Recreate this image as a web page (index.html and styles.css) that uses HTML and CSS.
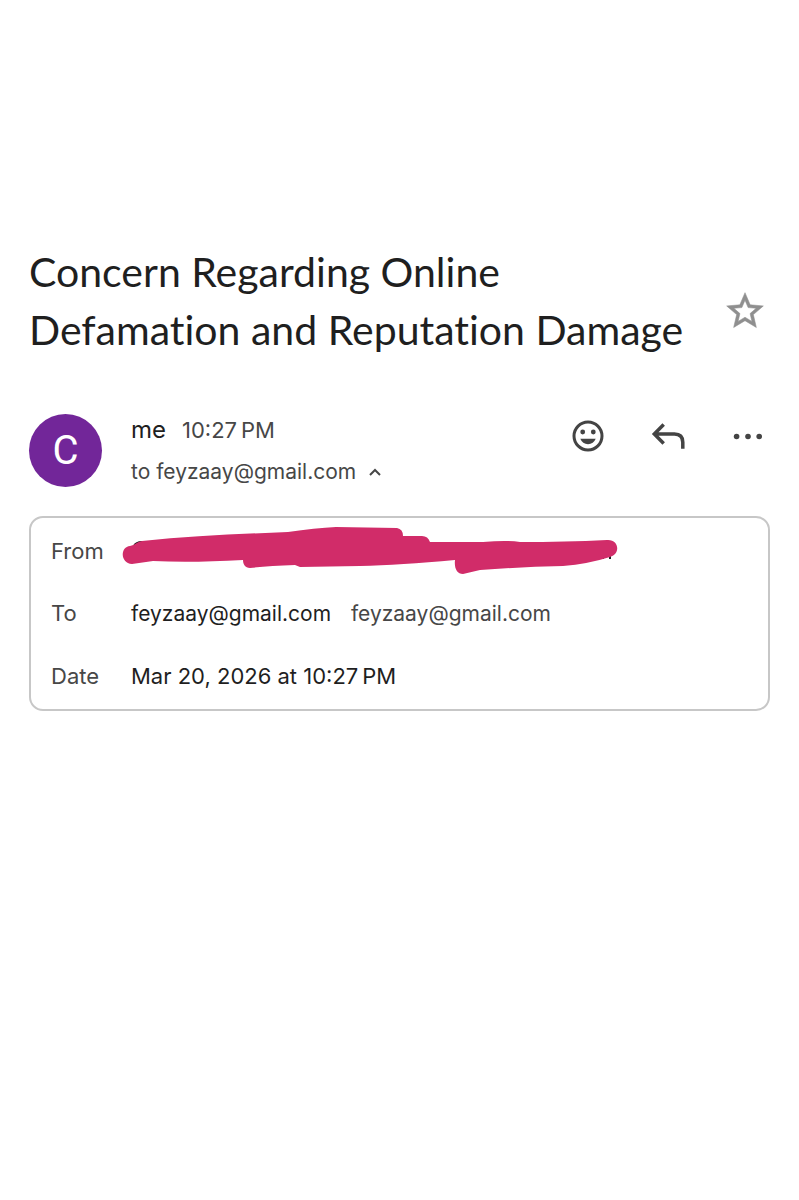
FILE: index.html
```html
<!DOCTYPE html>
<html lang="en">
<head>
    <meta charset="utf-8" />
    <meta name="viewport" content="width=device-width, initial-scale=1" />
    <title>Concern Regarding Online Defamation and Reputation Damage</title>
    <link rel="stylesheet" href="styles.css">
</head>
<body>
    <main class="mail">
        <header class="subject">
            <h1>Concern Regarding Online Defamation and Reputation Damage</h1>
            <button class="star-button" type="button" aria-label="Star">
                <svg class="star" viewBox="0 0 24 24">
                    <path d="M22 9.24l-7.19-.62L12 2 9.19 8.63 2 9.24l5.46 4.73L5.82 21 12 17.27 18.18 21l-1.63-7.03L22 9.24zM12 15.4l-3.76 2.27 1-4.28-3.32-2.88 4.38-.38L12 6.1l1.71 4.04 4.38.38-3.32 2.88 1 4.28L12 15.4z"/>
                </svg>
            </button>
        </header>

        <section class="sender">
            <div class="avatar">C</div>
            <div class="sender-info">
                <div class="sender-line">
                    <span class="name">me</span>
                    <time datetime="2026-03-20T22:27">10:27&#8239;PM</time>
                </div>
                <button class="recipient" type="button" aria-expanded="true">
                    <span class="email">to feyzaay@gmail.com</span>
                    <svg class="chevron" viewBox="0 0 14 10"><path d="M2 8l5-5 5 5"/></svg>
                </button>
            </div>
            <div class="actions">
                <button type="button" aria-label="Add reaction">
                    <svg class="action-icon" viewBox="0 0 32 32">
                        <circle class="line" cx="16" cy="16" r="14"/>
                        <circle cx="10.7" cy="12" r="2.4"/>
                        <circle cx="21.3" cy="12" r="2.4"/>
                        <path d="M8.3 18.7h15.4c-1.3 3.4-4.2 5.5-7.7 5.5s-6.4-2.1-7.7-5.5z"/>
                    </svg>
                </button>
                <button type="button" aria-label="Reply">
                    <svg class="action-icon" viewBox="0 0 32 32">
                        <path class="line reply" d="M11.7 4.6L2.3 14l9.4 9.4M2.3 14H22.500q8.300 0 8.300 8.300V28.700"/>
                    </svg>
                </button>
                <button type="button" aria-label="More">
                    <svg class="action-icon" viewBox="0 0 32 32">
                        <circle cx="4.6" cy="16.5" r="2.8"/>
                        <circle cx="16" cy="16.5" r="2.8"/>
                        <circle cx="27.2" cy="16.5" r="2.8"/>
                    </svg>
                </button>
            </div>
        </section>

        <dl class="details">
            <div class="row">
                <dt>From</dt>
                <dd class="redacted">
                    <svg class="scribble" viewBox="120 524 500 54" role="img" aria-label="Hidden address">
                        <path class="ink" d="M134 546q2-4 8-4M603 556v3M610 554v5"/>
                        <path d="M130 546C135 545 137 542 142 541C190 536 240 534 288 532Q315 528 336 527L397 528Q403 529 403 536H422Q428 536 430 542H483Q507 540 520 542Q565 542 607 540C619 539 621 554 610 557Q588 564 563 566Q520 567 480 570L463 574C457 574 454 568 455 560Q400 565 360 566L300 567L295 565Q268 566 250 568C245 568 243 564 243 560Q190 563 153 561L132 564C120 563 120 547 130 546z"/>
                    </svg>
                </dd>
            </div>
            <div class="row">
                <dt>To</dt>
                <dd class="email">feyzaay@gmail.com <a class="address" href="mailto:feyzaay@gmail.com">feyzaay@gmail.com</a></dd>
            </div>
            <div class="row">
                <dt>Date</dt>
                <dd>Mar 20, 2026 at 10:27&#8239;PM</dd>
            </div>
        </dl>
    </main>
</body>
</html>
```

FILE: styles.css
```css
body {
    margin: 0;
    background: #fff;
    color: #1f1f1f;
    font-family: Inter, "Liberation Sans", sans-serif;
    font-size: 22px;
    line-height: 28px;
}

button {
    padding: 0;
    border: 0;
    background: none;
    color: inherit;
    font: inherit;
    cursor: pointer;
}

svg {
    display: block;
    fill: currentColor;
}

.mail {
    padding: 243px 29px 40px;
}

.subject {
    display: flex;
    align-items: center;
    justify-content: space-between;
    gap: 16px;
    padding-right: 3px;
}

.subject h1 {
    margin: 0;
    max-width: 670px;
    font-family: Lato, "Open Sans", sans-serif;
    font-size: 41px;
    font-weight: 400;
    font-variant-ligatures: none;
    line-height: 58px;
}

.star-button {
    padding-top: 20px;
}

.star {
    width: 44px;
    height: 44px;
    color: #8f8f8f;
    stroke: currentColor;
    stroke-width: 0.3;
}

.sender {
    display: flex;
    align-items: flex-start;
    margin-top: 55px;
}

.avatar {
    width: 73px;
    height: 73px;
    border-radius: 50%;
    background: #722699;
    color: #fff;
    font-family: Roboto, sans-serif;
    font-size: 40px;
    line-height: 74px;
    text-align: center;
}

.sender-info {
    flex: 1;
    margin-left: 29px;
    padding-top: 2px;
}

.sender-line {
    display: flex;
    align-items: baseline;
    gap: 16px;
    margin-bottom: 14px;
}

.name {
    font-size: 24px;
}

.sender-line time,
.recipient,
.address,
dt {
    color: #474747;
}

.recipient {
    display: flex;
    align-items: center;
    gap: 12px;
}

.email {
    font-size: 21px;
}

.chevron {
    width: 14px;
    height: 10px;
    fill: none;
    stroke: currentColor;
    stroke-width: 2;
}

.actions {
    display: flex;
    gap: 48px;
    padding: 6px 6px 0 0;
    color: #444;
}

.action-icon {
    width: 32px;
    height: 32px;
    overflow: visible;
}

.line {
    fill: none;
    stroke: currentColor;
    stroke-width: 3;
}

.reply {
    stroke-width: 3.5;
}

.details {
    margin: 29px 0 0;
    padding: 2px 20px;
    border: 2px solid #c7c7c7;
    border-radius: 14px;
}

.row {
    display: flex;
    align-items: baseline;
    padding: 17px 0;
}

dt {
    width: 80px;
}

dd {
    margin: 0;
}

.address {
    margin-left: 14px;
    text-decoration: none;
}

.redacted {
    position: relative;
    align-self: stretch;
}

.scribble {
    position: absolute;
    top: -13px;
    left: -11px;
    width: 500px;
    height: 54px;
    color: #d12c69;
}

.ink {
    fill: none;
    stroke: #1f1f1f;
    stroke-width: 2;
}
```
